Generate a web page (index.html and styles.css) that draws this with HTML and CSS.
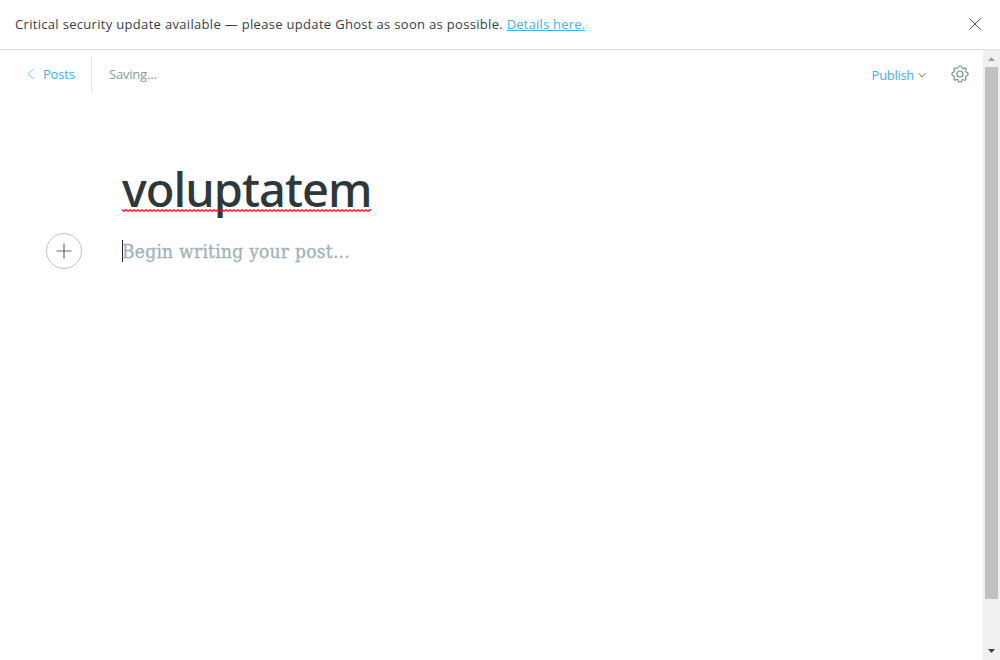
FILE: index.html
```html
<!DOCTYPE html>
<html lang="en">
<head>
<meta charset="utf-8">
<title>Editor</title>
<link rel="stylesheet" href="styles.css">
</head>
<body>
<aside class="alert">
  <p class="alert-text"><span class="alert-message">Critical security update available — please update Ghost as soon as possible.</span> <a class="alert-link" href="#">Details here.</a></p>
  <button class="alert-close" aria-label="Close"><svg width="12" height="12" viewBox="0 0 12 12"><path d="M.3.3l11.4 11.4M11.7.3L.3 11.7"/></svg></button>
</aside>
<div class="viewport">
  <main class="editor">
    <header class="toolbar">
      <a class="back" href="#"><svg width="8" height="12" viewBox="0 0 8 12"><path d="M7 .7L1 6l6 5.3"/></svg><span>Posts</span></a>
      <span class="status">Saving...</span>
      <a class="publish" href="#"><span>Publish</span><svg width="8" height="6" viewBox="0 0 8 6"><path d="M.4.8L4 5 7.6.8"/></svg></a>
      <button class="settings" aria-label="Settings"><svg width="18" height="18" viewBox="0 0 18 18"><circle cx="9" cy="9" r="3"/><path d="M7.2 2.2Q7.4 1 8.2 1h1.6q.8 0 1 1.2c.3 1.2 1.300 1.600 2.300 1q.9-.7 1.500-.1l.4.4q.6.600-.1 1.500c-.6 1-.2 2 1 2.300Q17 7.400 17 8.200v1.600q0 .8-1.200 1c-1.200.3-1.600 1.300-1 2.300q.7.900.1 1.500l-.4.400q-.6.600-1.500-.1c-1-.6-2-.2-2.300 1Q10.600 17 9.800 17H8.200q-.8 0-1-1.200c-.3-1.200-1.300-1.600-2.300-1q-.9.7-1.500.1l-.4-.4q-.6-.6.1-1.500c.6-1 .2-2-1-2.300Q1 10.600 1 9.800V8.200q0-.8 1.200-1c1.200-.3 1.600-1.300 1-2.300q-.7-.9-.1-1.500l.4-.4q.6-.6 1.500.1c1 .6 2 .2 2.200-.9z"/></svg></button>
    </header>
    <h1 class="title"><span class="title-text">voluptatem</span><svg class="spelling" width="249" height="3"><defs><pattern id="wave" width="4" height="3" patternUnits="userSpaceOnUse"><path d="M-1 1.500L0 .8L2 2.200L4 .8L5 1.500" /></pattern></defs><rect width="249" height="3" fill="url(#wave)"/></svg></h1>
    <div class="body-row">
      <button class="add" aria-label="Add card"><svg width="16" height="16" viewBox="0 0 16 16"><path d="M8 .5v15M.5 8h15"/></svg></button>
      <div class="body-text"><span class="placeholder">Begin writing your post...</span></div>
    </div>
  </main>
  <div class="scrollbar">
    <svg class="arrow up" width="7" height="4" viewBox="0 0 7 4"><path d="M0 4L3.500 0L7 4z"/></svg>
    <div class="thumb"></div>
    <svg class="arrow down" width="7" height="4" viewBox="0 0 7 4"><path d="M0 0L3.500 4L7 0z"/></svg>
  </div>
</div>
</body>
</html>
```
FILE: styles.css
```css
* { box-sizing: border-box; }
body {
  margin: 0;
  height: 660px;
  display: flex;
  flex-direction: column;
  overflow: hidden;
  background: #fff;
  color: #343f44;
  font-family: "Open Sans", "Noto Sans", sans-serif;
}
button { padding: 0; border: 0; background: none; display: flex; align-items: center; justify-content: center; }
svg { display: block; fill: none; flex: none; }
a { color: #3eb0ef; text-decoration: none; }

.alert {
  height: 50px;
  flex: none;
  display: flex;
  align-items: center;
  justify-content: space-between;
  padding: 0 19px 2px 15px;
  border-bottom: 1px solid #dcdfe0;
}
.alert-text { margin: 0; font-size: 13px; line-height: 20px; letter-spacing: 0.315px; white-space: nowrap; }
.alert-link { text-decoration: underline; letter-spacing: 0.2px; }
.alert-close svg { stroke: #4c5458; stroke-width: 1; }

.viewport { flex: 1; display: flex; }
.editor { flex: 1; }
.toolbar { display: flex; align-items: center; height: 48px; padding: 0 14px 0 27px; font-size: 13px; line-height: 20px; letter-spacing: -0.2px; }
.back { display: flex; align-items: center; gap: 8px; width: 65px; height: 36px; border-right: 1px solid #dfe7eb; }
.back svg { stroke: #79c7ef; stroke-width: 1; }
.status { padding-left: 17px; color: #8599a3; }
.publish { margin-left: auto; display: flex; align-items: center; gap: 4px; padding-top: 2px; letter-spacing: -0.3px; }
.publish svg { stroke: #6d8591; }
.settings { margin-left: 25px; }
.settings svg { stroke: #738a94; stroke-width: 1.1; }

.title { margin: 60px 0 0 122px; width: 249px; height: 64px; display: grid; font-family: "Noto Sans", sans-serif; font-size: 47px; line-height: 63px; font-weight: 500; letter-spacing: -0.95px; color: #2d373c; white-space: nowrap; }
.title-text, .spelling { grid-area: 1 / 1; }
.spelling { margin-top: 51px; }
.spelling path { stroke: #f00; stroke-width: 1.3; }

.body-row { display: flex; align-items: center; margin: 11px 0 0 46px; }
.add { width: 36px; height: 36px; border: 1px solid #b5c3ca; border-radius: 50%; }
.add svg { stroke: #5f7078; stroke-width: 1.2; }
.body-text { margin-left: 40px; height: 22px; border-left: 1px solid #222; display: flex; align-items: center; }
.placeholder { margin-left: -1px; color: #9fb1ba; font-family: Georgia, "DejaVu Serif Condensed", "DejaVu Serif", serif; font-size: 19px; line-height: 22px; letter-spacing: 0.26px; -webkit-text-stroke: 0.3px #9fb1ba; white-space: nowrap; }

.scrollbar { width: 17px; background: #f0f0f0; display: flex; flex-direction: column; align-items: center; padding: 7px 0 7px; }
.arrow.up { fill: #a0a0a0; }
.arrow.down { fill: #404040; margin-top: auto; }
.thumb { width: 13px; height: 532px; margin-top: 6px; background: #c1c1c1; }
```
